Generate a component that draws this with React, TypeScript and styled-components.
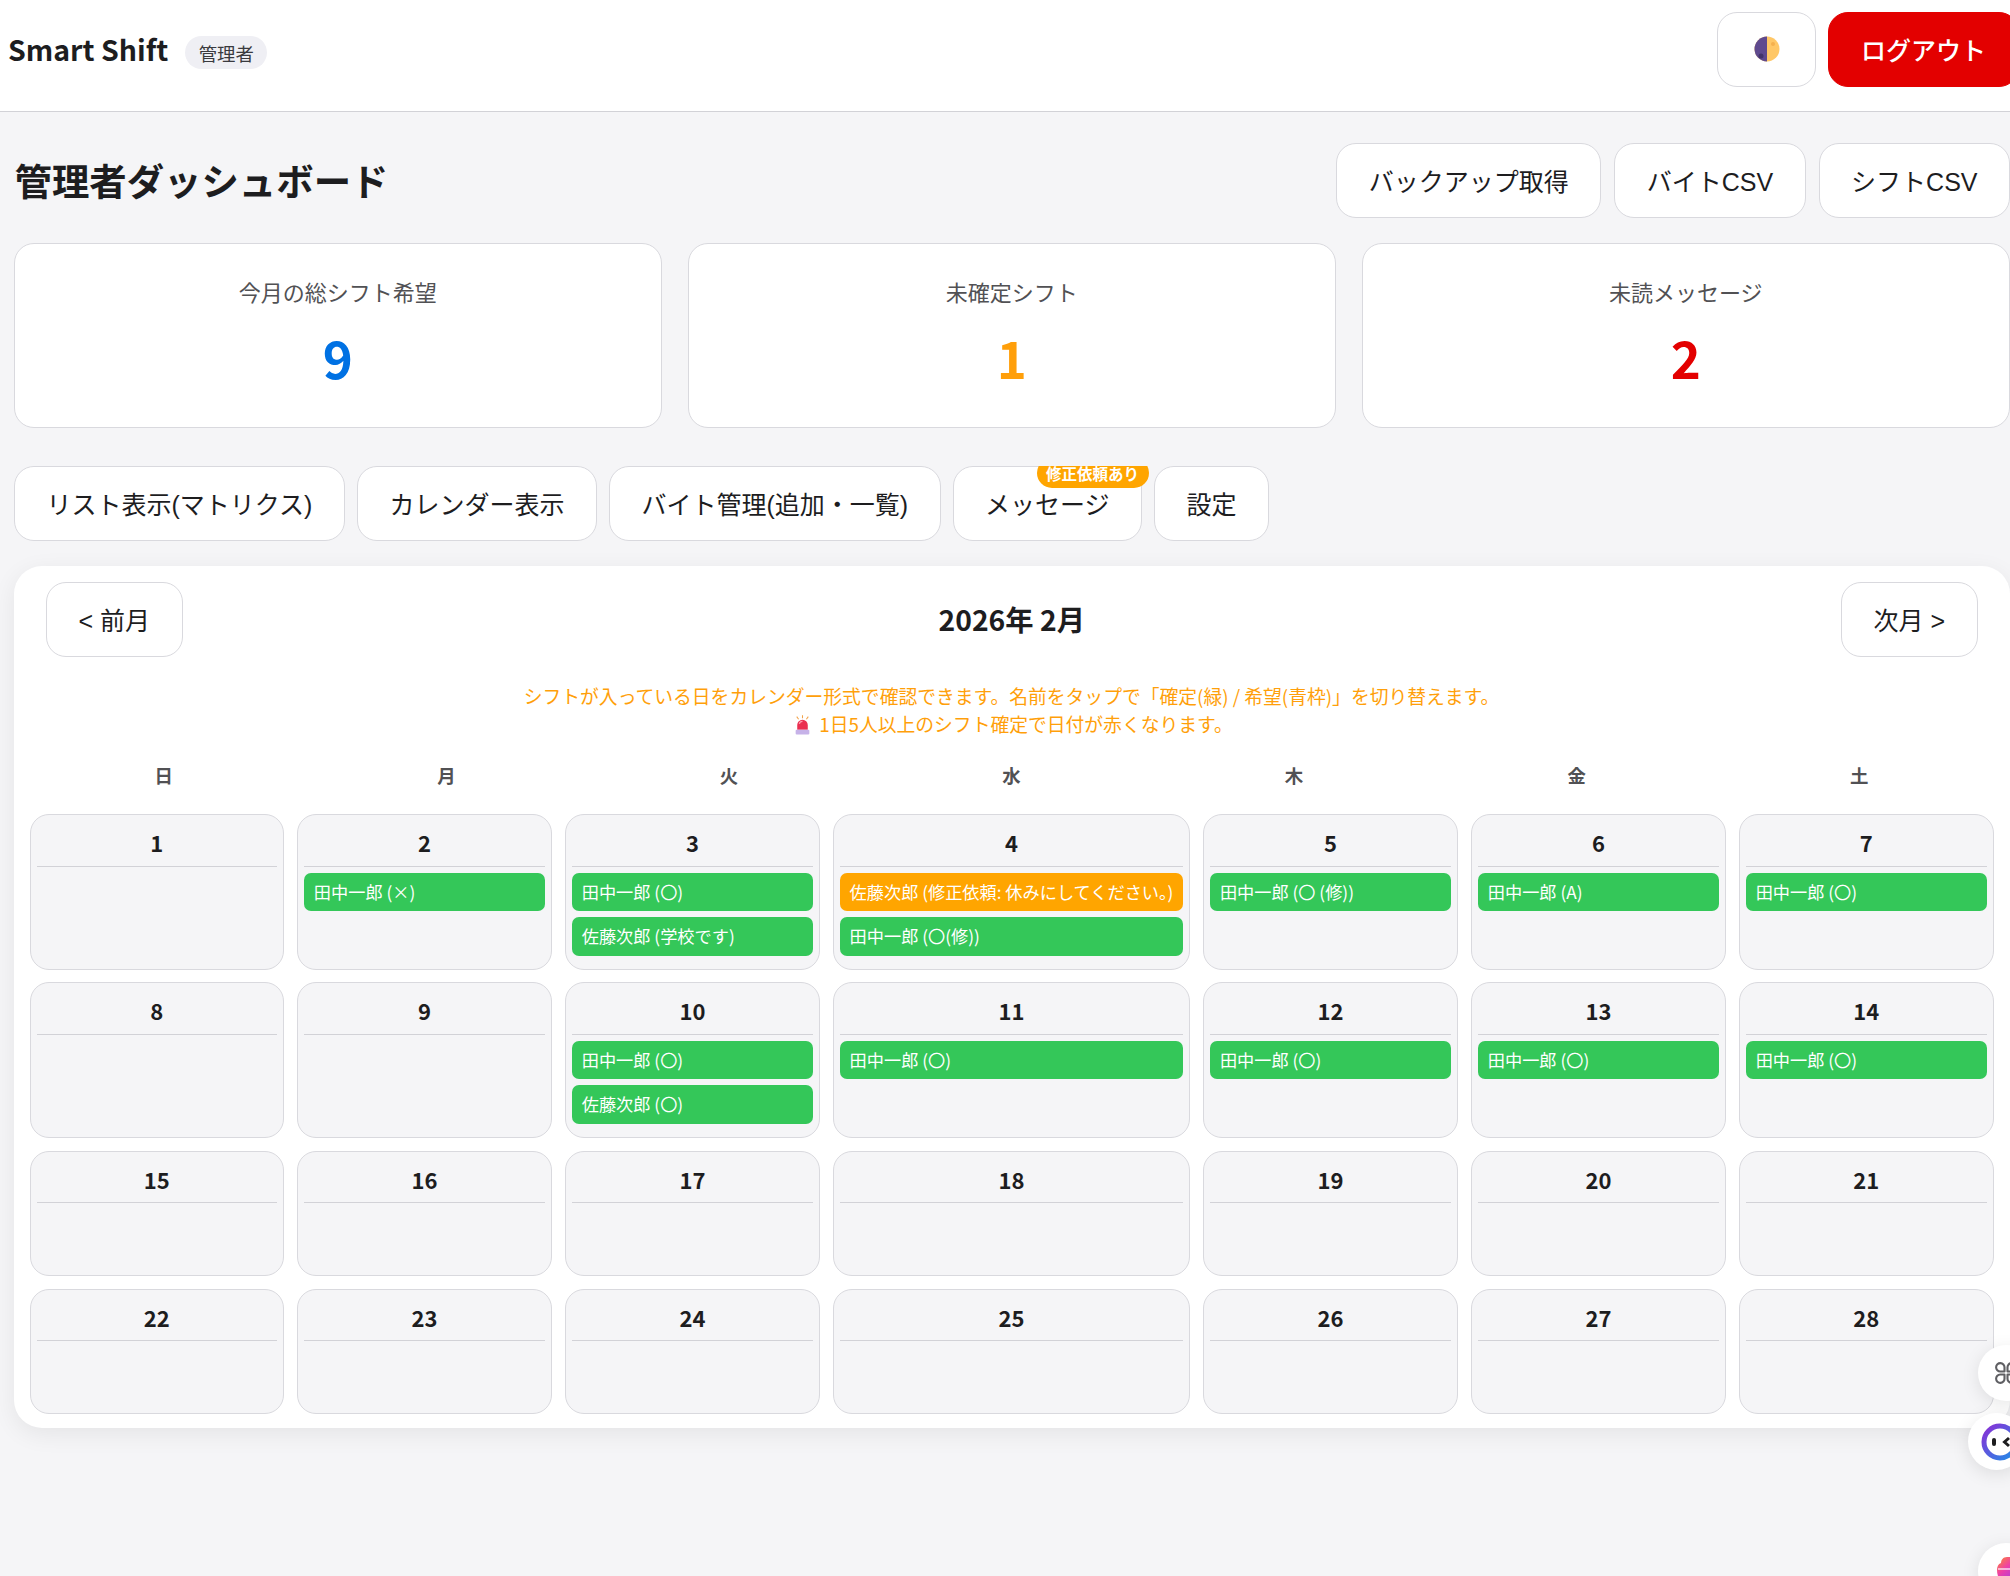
import React from "react";
import styled, { createGlobalStyle } from "styled-components";

const GlobalStyle = createGlobalStyle`
  html, body {
    margin: 0;
    padding: 0;
    overflow: hidden;
    background: #f5f5f7;
    color: #1d1d1f;
    font-family: "Noto Sans CJK JP", "Noto Sans", sans-serif;
  }
  * { box-sizing: border-box; }
`;

const Page = styled.div`
  width: 2010px;
  height: 1576px;
  position: relative;
  overflow: hidden;
`;

const Header = styled.header`
  height: 111.5px;
  background: #fff;
  border-bottom: 1.5px solid #d2d2d7;
  padding: 12px 0 0 8px;
  display: flex;
  justify-content: space-between;
  align-items: flex-start;
`;

const Brand = styled.div`
  display: flex;
  align-items: center;
  gap: 17px;
  height: 74px;
`;

const Logo = styled.div`
  font-size: 28.5px;
  font-weight: 700;
  margin-top: -2px;
`;

const RoleBadge = styled.span`
  height: 33px;
  width: 82px;
  margin-top: 7px;
  border-radius: 17px;
  background: #efeff4;
  color: #3a3a3e;
  font-size: 18.4px;
  display: flex;
  align-items: center;
  justify-content: center;
`;

const HeaderActions = styled.div`
  display: flex;
  gap: 12px;
  margin-right: -9px;
`;

const Button = styled.button`
  height: 74.5px;
  padding: 0 31.5px;
  background: #fff;
  border: 1.5px solid #d9d9de;
  border-radius: 20px;
  color: #1d1d1f;
  font-family: "Liberation Sans", "Noto Sans CJK JP", sans-serif;
  font-size: 25px;
  white-space: nowrap;
  flex-shrink: 0;
  display: flex;
  align-items: center;
  justify-content: center;
`;

const ThemeButton = styled(Button)`
  width: 99px;
  padding: 0;
`;

const LogoutButton = styled(Button)`
  width: 191px;
  padding: 0;
  background: #e30000;
  border-color: #e30000;
  color: #fff;
  font-weight: 500;
`;

const Main = styled.main`
  padding: 31.5px 0 0 14px;
`;

const TitleRow = styled.div`
  display: flex;
  justify-content: space-between;
  align-items: center;
  height: 74.5px;
`;

const Title = styled.h1`
  margin: 0 0 0 0.5px;
  font-size: 37.4px;
  font-weight: 700;
`;

const TitleActions = styled.div`
  display: flex;
  gap: 13px;
`;

const Stats = styled.section`
  display: grid;
  grid-template-columns: repeat(3, 1fr);
  gap: 26.5px;
  margin: 25.5px 0.5px 0 0;
`;

const StatCard = styled.div`
  height: 184.5px;
  background: #fff;
  border: 1.5px solid #d9d9de;
  border-radius: 20px;
  display: flex;
  flex-direction: column;
  align-items: center;
  padding-top: 28.5px;
`;

const StatLabel = styled.div`
  font-size: 22px;
  line-height: 36px;
  color: #515154;
`;

const StatValue = styled.div<{ $color: string }>`
  font-size: 51px;
  line-height: 74px;
  margin-top: 11.5px;
  font-weight: 700;
  color: ${(p) => p.$color};
`;

const Tabs = styled.nav`
  display: flex;
  gap: 12px;
  margin-top: 38.5px;
  height: 74.5px;
  overflow: hidden;
`;

const TabWrap = styled.div`
  position: relative;
  flex-shrink: 0;
`;

const TabBadge = styled.span`
  position: absolute;
  top: -8px;
  left: 84px;
  width: 112px;
  height: 29.5px;
  border-radius: 15px;
  background: #ffa500;
  color: #fff;
  font-size: 15.5px;
  font-weight: 700;
  display: flex;
  align-items: center;
  justify-content: center;
  white-space: nowrap;
`;

const Panel = styled.section`
  margin: 25.5px 0.5px 0 0;
  background: #fff;
  border-radius: 28px;
  box-shadow: 0 6px 24px rgba(0, 0, 0, 0.07);
  padding: 16px 16px 14px 15.5px;
`;

const MonthBar = styled.div`
  display: flex;
  justify-content: space-between;
  align-items: center;
  padding: 0 16px 0 16.5px;
`;

const MonthTitle = styled.h2`
  margin: 0 0 2px;
  font-size: 28.3px;
  font-weight: 700;
`;

const Note = styled.p`
  margin: 25.5px 0 0;
  text-align: center;
  font-size: 18.8px;
  line-height: 28px;
  color: #ff9f0a;
`;

const SirenIcon = styled.svg`
  width: 17px;
  height: 20px;
  vertical-align: -3px;
  margin: 0 8px 0 4px;
`;

const WeekRow = styled.div`
  display: grid;
  grid-template-columns: repeat(7, 1fr);
  column-gap: 14px;
  margin-top: 22px;
  height: 54px;
`;

const WeekDay = styled.div`
  text-align: center;
  font-size: 18.4px;
  font-weight: 700;
  line-height: 31px;
  color: #515154;
`;

const MonthGrid = styled.div`
  display: grid;
  grid-template-columns: repeat(7, 1fr);
  column-gap: 13.5px;
  row-gap: 12.8px;
`;

const DayCell = styled.div`
  min-height: 125.5px;
  background: #f5f5f7;
  border: 1.5px solid #d9d9de;
  border-radius: 19px;
  padding: 6px 6px 13px;
`;

const DayNumber = styled.div`
  height: 45.5px;
  border-bottom: 1.5px solid #d2d2d7;
  text-align: center;
  font-size: 22px;
  font-weight: 700;
  line-height: 42px;
  margin-bottom: 6px;
`;

const ShiftChip = styled.div<{ $request?: boolean }>`
  height: 38.5px;
  border-radius: 7px;
  padding: 0 9.5px;
  background: ${(p) => (p.$request ? "#ffa500" : "#34c759")};
  color: #fff;
  font-size: 17.2px;
  line-height: 38px;
  white-space: nowrap;
  & + & { margin-top: 6px; }
`;

const Floater = styled.div<{ $top: number; $size: number; $left: number }>`
  position: absolute;
  top: ${(p) => p.$top}px;
  left: ${(p) => p.$left}px;
  width: ${(p) => p.$size}px;
  height: ${(p) => p.$size}px;
  border-radius: 50%;
  background: #fff;
  box-shadow: 0 4px 18px rgba(0, 0, 0, 0.1);
  display: flex;
  align-items: center;
  justify-content: center;
`;

const BotGlyph = styled.svg`
  flex-shrink: 0;
  margin-left: 7px;
`;

const DAYS = ["日", "月", "火", "水", "木", "金", "土"];

const STATS = [
  { label: "今月の総シフト希望", value: 9, color: "#0071e3" },
  { label: "未確定シフト", value: 1, color: "#ff9f0a" },
  { label: "未読メッセージ", value: 2, color: "#e30000" },
];

const SHIFTS: Record<number, { text: string; request?: boolean }[]> = {
  2: [{ text: "田中一郎 (×)" }],
  3: [{ text: "田中一郎 (〇)" }, { text: "佐藤次郎 (学校です)" }],
  4: [
    { text: "佐藤次郎 (修正依頼: 休みにしてください。)", request: true },
    { text: "田中一郎 (〇(修))" },
  ],
  5: [{ text: "田中一郎 (〇 (修))" }],
  6: [{ text: "田中一郎 (A)" }],
  7: [{ text: "田中一郎 (〇)" }],
  10: [{ text: "田中一郎 (〇)" }, { text: "佐藤次郎 (〇)" }],
  11: [{ text: "田中一郎 (〇)" }],
  12: [{ text: "田中一郎 (〇)" }],
  13: [{ text: "田中一郎 (〇)" }],
  14: [{ text: "田中一郎 (〇)" }],
};

const MoonIcon = () => (
  <svg width="26" height="26" viewBox="0 0 26 26">
    <circle cx="13" cy="13" r="12.5" fill="#ffc766" />
    <path d="M13 .5a12.5 12.5 0 0 0 0 25z" fill="#5f4a8f" />
    <circle cx="7" cy="20" r="2.5" fill="#43346b" />
    <circle cx="19" cy="8" r="2" fill="#f5b04f" />
  </svg>
);

const Siren = () => (
  <SirenIcon viewBox="0 0 16 19">
    <path d="M3 14V9.500a5 5 0 0 1 10 0V14z" fill="#ea2f50" />
    <path d="M5 8.500a3 3 0 0 1 3-2.500" stroke="#ff9db0" strokeWidth="1.200" fill="none" />
    <rect x="1.500" y="14" width="13" height="4.500" rx="1" fill="#c6b2e8" />
    <path d="M8 .3v2.700M2.500 1.500l1.800 2.500M13.500 1.500l-1.800 2.500" stroke="#f2a24a" strokeWidth="1" />
  </SirenIcon>
);

const CommandIcon = () => (
  <svg width="22" height="22" viewBox="0 0 22 22" fill="none" stroke="#5f5f63" strokeWidth="2.100" strokeLinejoin="round">
    <path d="M9.500 9.500V5.500A4.200 4.200 0 1 0 5.300 9.500H9.500z" />
    <path d="M12.500 9.500V5.500A4.200 4.200 0 1 1 16.700 9.500H12.500z" />
    <path d="M9.500 12.500v4A4.200 4.200 0 1 1 5.300 12.500H9.500z" />
    <path d="M12.500 12.500v4a4.200 4.200 0 1 0 4.200-4H12.500z" />
  </svg>
);

const BotIcon = () => (
  <BotGlyph width="38" height="38" viewBox="0 0 38 38" fill="none">
    <defs>
      <linearGradient id="botRing" x1="0" y1="0" x2="1" y2="1">
        <stop offset="0" stopColor="#8b2fd6" />
        <stop offset="1" stopColor="#1f8fe8" />
      </linearGradient>
    </defs>
    <circle cx="19" cy="19" r="16" stroke="url(#botRing)" strokeWidth="5" />
    <rect x="11" y="15" width="4" height="8" rx="2" fill="#1d1d1f" />
    <path d="M28 15l-4.500 4 4.500 4" stroke="#1d1d1f" strokeWidth="3" />
  </BotGlyph>
);

const BrainIcon = () => (
  <svg width="18" height="28" viewBox="0 0 18 28">
    <defs>
      <linearGradient id="brainFill" x1="0" y1="0" x2="0.600" y2="1">
        <stop offset="0" stopColor="#ff8a2b" />
        <stop offset="0.500" stopColor="#ee3fa8" />
        <stop offset="1" stopColor="#a83fe0" />
      </linearGradient>
    </defs>
    <path d="M10 0C6 0 4 3 4 6 1 7 0 10 0 13c0 4 1 8 4 10 1 3 3 5 6 5h8V0z" fill="url(#brainFill)" />
    <path d="M1 12h17" stroke="#fff" strokeWidth="1.500" opacity="0.800" />
  </svg>
);

export default function App() {
  return (
    <Page>
      <GlobalStyle />
      <Header>
        <Brand>
          <Logo>Smart Shift</Logo>
          <RoleBadge>管理者</RoleBadge>
        </Brand>
        <HeaderActions>
          <ThemeButton>
            <MoonIcon />
          </ThemeButton>
          <LogoutButton>ログアウト</LogoutButton>
        </HeaderActions>
      </Header>

      <Main>
        <TitleRow>
          <Title>管理者ダッシュボード</Title>
          <TitleActions>
            <Button>バックアップ取得</Button>
            <Button>バイトCSV</Button>
            <Button>シフトCSV</Button>
          </TitleActions>
        </TitleRow>

        <Stats>
          {STATS.map((s) => (
            <StatCard key={s.label}>
              <StatLabel>{s.label}</StatLabel>
              <StatValue $color={s.color}>{s.value}</StatValue>
            </StatCard>
          ))}
        </Stats>

        <Tabs>
          <Button>リスト表示(マトリクス)</Button>
          <Button>カレンダー表示</Button>
          <Button>バイト管理(追加・一覧)</Button>
          <TabWrap>
            <Button>メッセージ</Button>
            <TabBadge>修正依頼あり</TabBadge>
          </TabWrap>
          <Button>設定</Button>
        </Tabs>

        <Panel>
          <MonthBar>
            <Button>&lt; 前月</Button>
            <MonthTitle>2026年 2月</MonthTitle>
            <Button>次月 &gt;</Button>
          </MonthBar>

          <Note>
            シフトが入っている日をカレンダー形式で確認できます。名前をタップで「確定(緑) / 希望(青枠)」を切り替えます。
            <br />
            <Siren />
            1日5人以上のシフト確定で日付が赤くなります。
          </Note>

          <WeekRow>
            {DAYS.map((d) => (
              <WeekDay key={d}>{d}</WeekDay>
            ))}
          </WeekRow>

          <MonthGrid>
            {Array.from({ length: 28 }, (_, i) => i + 1).map((day) => (
              <DayCell key={day}>
                <DayNumber>{day}</DayNumber>
                {(SHIFTS[day] || []).map((s) => (
                  <ShiftChip key={s.text} $request={s.request}>
                    {s.text}
                  </ShiftChip>
                ))}
              </DayCell>
            ))}
          </MonthGrid>
        </Panel>
      </Main>

      <Floater $top={1345} $left={1978} $size={56}>
        <CommandIcon />
      </Floater>
      <Floater $top={1413} $left={1968} $size={57}>
        <BotIcon />
      </Floater>
      <Floater $top={1543} $left={1978} $size={56}>
        <BrainIcon />
      </Floater>
    </Page>
  );
}
